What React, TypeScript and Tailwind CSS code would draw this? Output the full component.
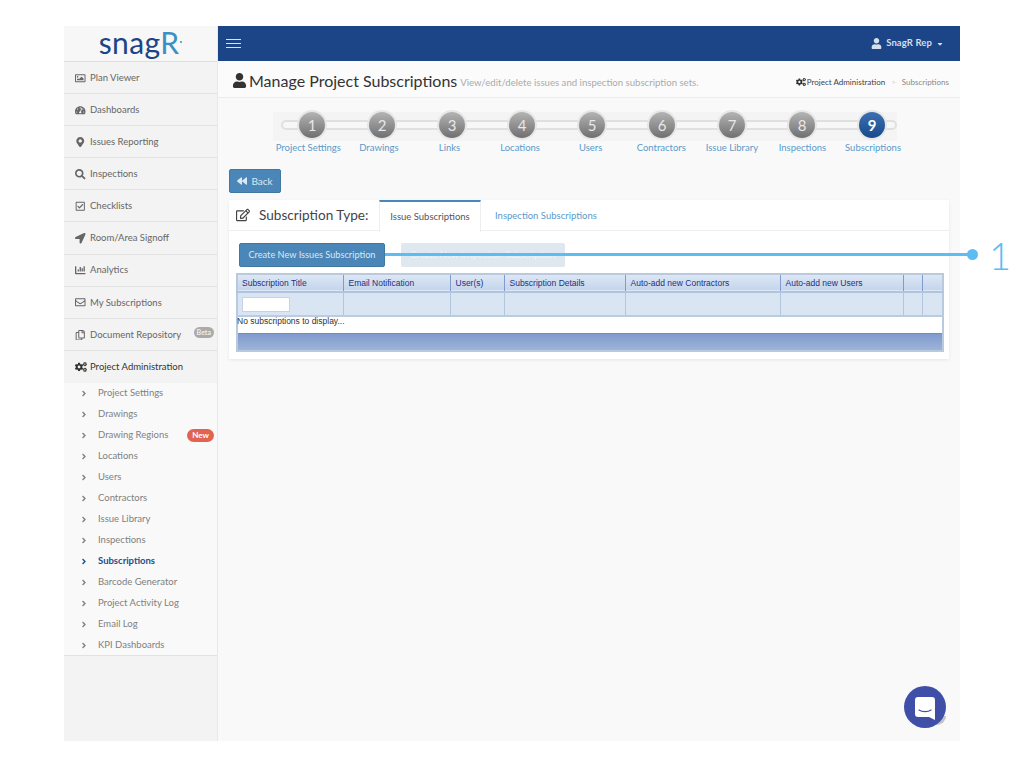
import {
  FaAngleRight,
  FaBackward,
  FaCaretDown,
  FaChartBar,
  FaCogs,
  FaLocationArrow,
  FaMapMarkerAlt,
  FaRegCheckSquare,
  FaRegCopy,
  FaRegEdit,
  FaRegEnvelope,
  FaRegImage,
  FaSearch,
  FaTachometerAlt,
  FaUser,
} from "react-icons/fa";

const mainNav = [
  { label: "Plan Viewer", icon: FaRegImage },
  { label: "Dashboards", icon: FaTachometerAlt },
  { label: "Issues Reporting", icon: FaMapMarkerAlt },
  { label: "Inspections", icon: FaSearch },
  { label: "Checklists", icon: FaRegCheckSquare },
  { label: "Room/Area Signoff", icon: FaLocationArrow },
  { label: "Analytics", icon: FaChartBar },
  { label: "My Subscriptions", icon: FaRegEnvelope },
  { label: "Document Repository", icon: FaRegCopy, beta: true },
];

const subNav = [
  "Project Settings",
  "Drawings",
  "Drawing Regions",
  "Locations",
  "Users",
  "Contractors",
  "Issue Library",
  "Inspections",
  "Subscriptions",
  "Barcode Generator",
  "Project Activity Log",
  "Email Log",
  "KPI Dashboards",
];

const steps = ["Project Settings", "Drawings", "Links", "Locations", "Users", "Contractors", "Issue Library", "Inspections", "Subscriptions"];

const columns = [
  { title: "Subscription Title", w: "w-[106px]" },
  { title: "Email Notification", w: "w-[107px]" },
  { title: "User(s)", w: "w-[54px]" },
  { title: "Subscription Details", w: "w-[121px]" },
  { title: "Auto-add new Contractors", w: "w-[155px]" },
  { title: "Auto-add new Users", w: "w-[123px]" },
  { title: "", w: "w-[19px]" },
  { title: "", w: "w-[21px]" },
];

const Sidebar = () => (
  <aside className="w-[154px] shrink-0 bg-[#f3f3f3] border-r border-[#e8e8e8]">
    <div className="h-[36px] bg-[#f7f7f7] border-b border-[#dedede] flex items-center justify-center">
      <span className="text-[30px] leading-none tracking-[0.4px] text-[#1c4587] -mt-1">
        snag<span className="text-[#3c8fc4]">R</span>
      </span>
      <span className="w-[2px] h-[2px] rounded-full bg-[#3c8fc4] -mt-1 ml-px" />
    </div>
    {mainNav.map((item) => (
      <div key={item.label} className="h-[32.1px] border-b border-[#e2e2e2] flex items-center pt-[1px] pl-[9px] pr-[3px] text-[#666]">
        <span className="w-[15px] flex justify-center shrink-0">
          <item.icon className="text-[10.5px]" />
        </span>
        <span className="ml-[2px] text-[9.5px] whitespace-nowrap">{item.label}</span>
        {item.beta && <span className="ml-auto mb-[5px] bg-[#aaa] text-[#eee] text-[7px] font-bold leading-[11px] px-[3px] rounded-full">Beta</span>}
      </div>
    ))}
    <div className="h-[32px] flex items-center pt-[1px] pl-[9px] text-[#333]">
      <span className="w-[15px] flex justify-center shrink-0">
        <FaCogs className="text-[12px]" />
      </span>
      <span className="ml-[2px] text-[9.5px]">Project Administration</span>
    </div>
    <div className="h-[273px] bg-[#f9f9f9] border-b border-[#e2e2e2]">
      {subNav.map((name) => {
        const active = name === "Subscriptions";
        return (
          <div key={name} className={`h-[21px] flex items-center pl-[17px] pr-[3px] text-[9.5px] ${active ? "text-[#1c4f8f] font-bold" : "text-[#808080]"}`}>
            <FaAngleRight className="text-[9px] w-[6px]" />
            <span className="ml-[11px]">{name}</span>
            {name === "Drawing Regions" && <span className="ml-auto bg-[#e0644f] text-white text-[8px] font-bold leading-[13px] px-[5px] rounded-full">New</span>}
          </div>
        );
      })}
    </div>
  </aside>
);

const Wizard = () => (
  <div className="h-[71px] pl-[55px] pt-[14px]">
    <div className="relative w-[624px] h-[29px] bg-[#f4f4f4]">
      <div className="absolute left-[8px] right-0 top-[8px] h-[10px] rounded-full border-2 border-[#e0e0e0] bg-[#f7f7f7]" />
      <div className="relative flex pl-[4px]">
        {steps.map((_, i) => (
          <div key={i} className="w-[70px] shrink-0 flex justify-center">
            <span
              className={`w-[26px] h-[26px] rounded-full flex items-center justify-center text-[15px] ring-2 ring-[#e6e6e6] ${
                i === 8 ? "bg-gradient-to-b from-[#3c70b0] to-[#174a8c] text-white font-bold" : "bg-gradient-to-b from-[#b4b4b4] to-[#707070] text-[#e8e8e8]"
              }`}
            >
              {i + 1}
            </span>
          </div>
        ))}
      </div>
    </div>
    <div className="flex -mt-[1px]">
      {steps.map((s) => (
        <span key={s} className="w-[70.6px] shrink-0 text-center text-[9.5px] leading-[16px] text-[#5b9ac9] whitespace-nowrap">
          {s}
        </span>
      ))}
    </div>
  </div>
);

const SubscriptionTable = () => (
  <table className="mt-[6px] ml-[7px] w-[706px] table-fixed border-collapse border-2 border-[#b9c9de] font-['Liberation_Sans',sans-serif] text-[8.5px]">
    <thead>
      <tr className="h-[18px] bg-gradient-to-b from-[#dfe8f5] to-[#c4d5ec] text-[#1f2f80] border-b-2 border-[#b0c4e0]">
        {columns.map((c, i) => (
          <th key={i} className={`${c.w} font-normal text-left pl-[5px] first:pl-[4px] border-r border-[#7f9ccc] last:border-r-0`}>
            {c.title}
          </th>
        ))}
      </tr>
      <tr className="h-[24px] bg-[#d9e5f3]">
        {columns.map((_, i) => (
          <td key={i} className="border-r border-[#b4c6de] last:border-r-0 pl-[4px]">
            {i === 0 && <input className="block w-[48px] h-[15px] bg-white border border-[#c6d3e4]" />}
          </td>
        ))}
      </tr>
    </thead>
    <tbody>
      <tr className="h-[17px] bg-white border-t-2 border-[#bccbe0]">
        <td colSpan={8} className="align-top text-[#333] leading-[9px]">
          <span className="relative -left-px">No subscriptions to display...</span>
        </td>
      </tr>
      <tr className="h-[18px] bg-gradient-to-b from-[#7f9bcd] to-[#a0b5d9] border-t border-[#6f8dc0]">
        <td colSpan={8} />
      </tr>
    </tbody>
  </table>
);

export default function App() {
  return (
    <div className="relative w-[1024px] h-[768px] bg-white pt-[26px] pl-[64px] overflow-hidden font-['Lato',sans-serif]">
      <div className="flex w-[896px] h-[715px]">
        <Sidebar />
        <main className="flex-1 bg-[#f9f9f9] min-w-0">
          <header className="h-[35px] bg-[#1c4587] flex items-center pl-[8px] pr-[16px] text-[#d5deeb] text-[9.5px]">
            <div className="w-[15px] flex flex-col gap-[2.5px]">
              <span className="h-[1.5px] bg-white/85" />
              <span className="h-[1.5px] bg-white/85" />
              <span className="h-[1.5px] bg-white/85" />
            </div>
            <FaUser className="text-[11px] ml-auto mr-[4px]" />
            <span className="font-bold tracking-[0.1px]">SnagR Rep</span>
            <FaCaretDown className="text-[8px] ml-[4px]" />
          </header>
          <div className="h-[37px] pt-[3px] bg-[#fbfbfb] border-b border-[#ececec] flex items-center pl-[14px] pr-[11px]">
            <FaUser className="text-[15px] text-[#333]" />
            <h1 className="ml-[2px] text-[16px] font-normal text-[#333]">Manage Project Subscriptions</h1>
            <span className="ml-[3px] mt-[5px] text-[9.6px] text-[#aaa]">View/edit/delete issues and inspection subscription sets.</span>
            <div className="ml-auto flex items-center text-[8px] mt-[3px]">
              <FaCogs className="text-[10px] text-[#333] mr-[1px]" />
              <span className="text-[#444]">Project Administration</span>
              <span className="mx-[6px] text-[#ccc]">&gt;</span>
              <span className="text-[#888]">Subscriptions</span>
            </div>
          </div>
          <Wizard />
          <div className="ml-[11px] w-[52px] h-[24px] bg-[#4a86b8] border border-[#40789f] rounded-[2px] flex items-center justify-center text-[10px] text-[#dbe8f2]">
            <FaBackward className="text-[10px] mr-[4px]" />
            Back
          </div>
          <section className="mt-[7px] ml-[11px] w-[720px] h-[159px] bg-white shadow-[0_1px_3px_rgba(0,0,0,0.08)]">
            <div className="h-[31px] flex border-b border-[#eee]">
              <div className="w-[150px] flex items-center pl-[7px] text-[13.6px] text-[#444]">
                <FaRegEdit className="text-[14px] mr-[9px]" />
                <span className="whitespace-nowrap">Subscription Type:</span>
              </div>
              <div className="w-[102px] h-[32px] bg-white border-t-2 border-x border-x-[#eee] border-t-[#4a86b8] flex items-center justify-center text-[9.5px] text-[#555]">
                Issue Subscriptions
              </div>
              <div className="pl-[14px] flex items-center text-[9.5px] text-[#5b9ac9] pt-[2px]">Inspection Subscriptions</div>
            </div>
            <div className="flex pt-[12px] pl-[10px] gap-[16px]">
              <div className="w-[146px] h-[24px] bg-[#4a86b8] border border-[#40789f] rounded-[2px] flex items-center justify-center text-[9.2px] text-[#dbe8f2] whitespace-nowrap">
                Create New Issues Subscription
              </div>
              <div className="w-[164px] h-[24px] bg-[#dfe7ef] rounded-[2px] flex items-center justify-center text-[9.2px] text-[#f2f5f8] whitespace-nowrap">
                Create New Inspection Subscription
              </div>
            </div>
            <SubscriptionTable />
          </section>
        </main>
      </div>

      {/* callout over the page */}
      <div className="absolute left-[385px] top-[253px] w-[587px] h-[3px] bg-[#5bbdf4]" />
      <div className="absolute left-[967px] top-[249px] w-[11px] h-[11px] rounded-full bg-[#5bbdf4]" />
      <div className="absolute left-[989px] top-[234px] text-[38px] leading-[42px] font-light text-[#5bbdf4]">1</div>

      {/* chat launcher */}
      <div className="absolute left-[935px] top-[716px] w-[11px] h-[9px] rounded-br-full bg-[#c4c4c4]" />
      <div className="absolute left-[904px] top-[686px] w-[42px] h-[42px] rounded-full bg-[#3f4fa8] flex items-center justify-center">
        <svg width="20" height="23" viewBox="0 0 20 23" className="mt-[2px]">
          <path d="M3 0h14a3 3 0 0 1 3 3v20l-6-3H3a3 3 0 0 1-3-3V3a3 3 0 0 1 3-3z" fill="#fff" />
          <path d="M4 13c3 2.2 9 2.2 12 0" fill="none" stroke="#3f4fa8" strokeWidth="1.2" strokeLinecap="round" />
        </svg>
      </div>
    </div>
  );
}
